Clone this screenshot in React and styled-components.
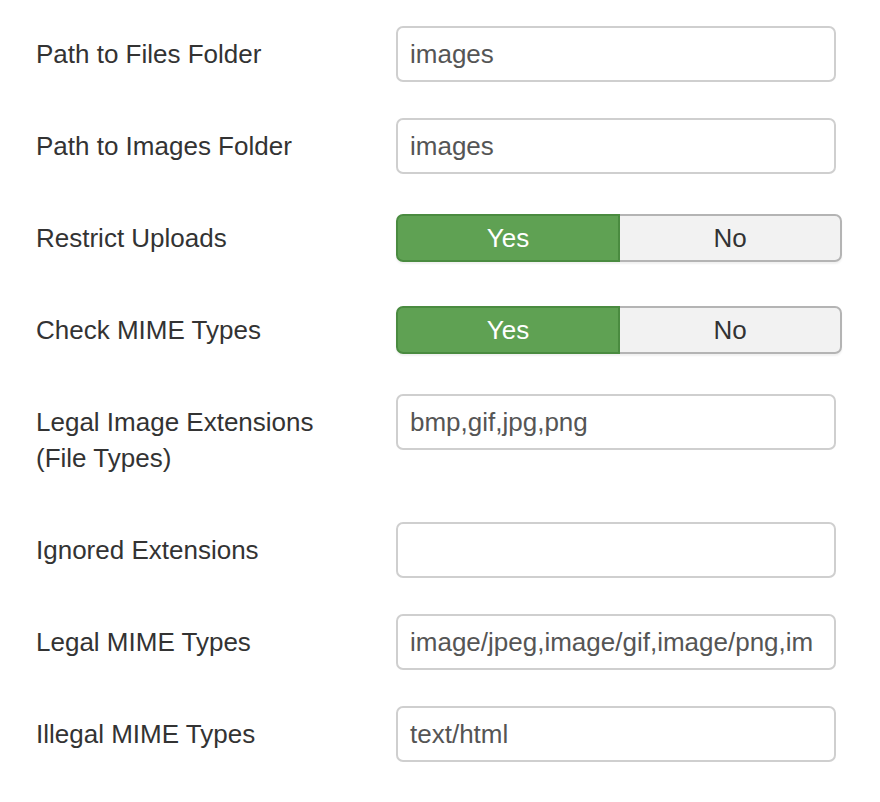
import React from "react";
import styled, { createGlobalStyle } from "styled-components";

const Global = createGlobalStyle`
  html, body { margin: 0; padding: 0; background: #fff; }
  body { font-family: "Liberation Sans", Arial, Helvetica, sans-serif; }
`;

const Form = styled.div`
  padding: 26px 0 0 36px;
  display: flex;
  flex-direction: column;
  gap: 36px;
`;

const Row = styled.div`
  display: flex;
  align-items: flex-start;
`;

const Label = styled.div`
  width: 360px;
  padding: 10px 0;
  font-size: 26px;
  line-height: 36px;
  color: #333;
`;

const Input = styled.div`
  box-sizing: border-box;
  width: 440px;
  height: 56px;
  border: 2px solid #cfcfcf;
  border-radius: 7px;
  padding: 0 12px;
  font-size: 26px;
  line-height: 52px;
  color: #555;
  white-space: nowrap;
  overflow: hidden;
  background: #fff;
`;

const ToggleWrap = styled.div`
  margin-top: 4px;
  display: flex;
  width: 446px;
  height: 48px;
  border-radius: 7px;
  box-shadow: 0 2px 2px rgba(0, 0, 0, 0.06);
`;

const ToggleBtn = styled.div`
  box-sizing: border-box;
  flex: ${(p) => (p.$first ? "0 0 224px" : "1")};
  display: flex;
  align-items: center;
  justify-content: center;
  font-size: 26px;
  color: ${(p) => (p.$active ? "#fff" : "#333")};
  background: ${(p) => (p.$active ? "#5fa153" : "#f2f2f2")};
  border: 2px solid ${(p) => (p.$active ? "#4a8b40" : "#b4b4b4")};
  border-left-width: ${(p) => (p.$first ? "2px" : "0")};
  border-radius: ${(p) => (p.$first ? "7px 0 0 7px" : "0 7px 7px 0")};
`;

const Toggle = () => (
  <ToggleWrap>
    <ToggleBtn $first $active>Yes</ToggleBtn>
    <ToggleBtn>No</ToggleBtn>
  </ToggleWrap>
);

const rows = [
  { label: "Path to Files Folder", value: "images" },
  { label: "Path to Images Folder", value: "images" },
  { label: "Restrict Uploads", toggle: true },
  { label: "Check MIME Types", toggle: true },
  { label: <>Legal Image Extensions<br />(File Types)</>, value: "bmp,gif,jpg,png" },
  { label: "Ignored Extensions", value: "" },
  { label: "Legal MIME Types", value: "image/jpeg,image/gif,image/png,im" },
  { label: "Illegal MIME Types", value: "text/html" },
];

export default function App() {
  return (
    <>
      <Global />
      <Form>
        {rows.map((r, i) => (
          <Row key={i}>
            <Label>{r.label}</Label>
            {r.toggle ? <Toggle /> : <Input>{r.value}</Input>}
          </Row>
        ))}
      </Form>
    </>
  );
}
